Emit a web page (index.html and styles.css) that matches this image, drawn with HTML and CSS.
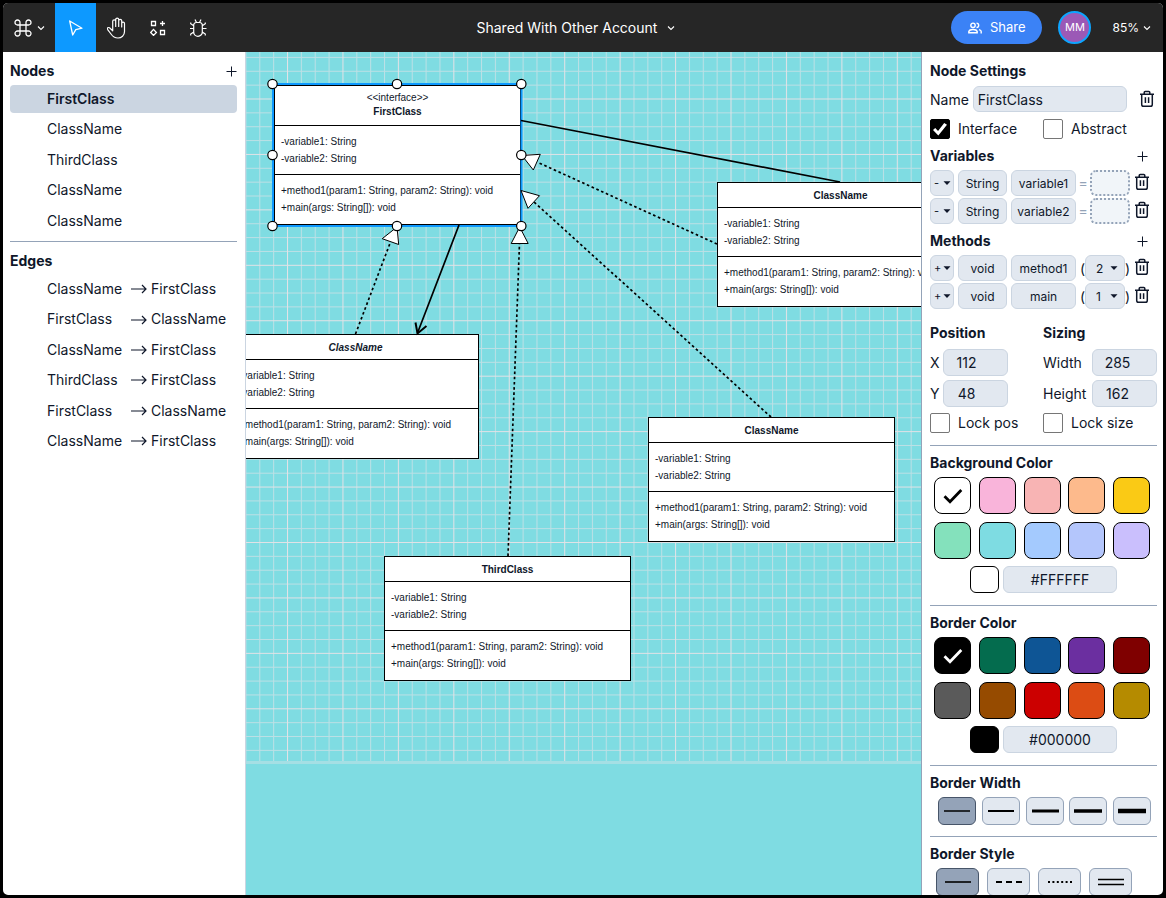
FILE: index.html
```html
<!DOCTYPE html>
<html lang="en">
<head>
<meta charset="utf-8">
<title>Shared With Other Account</title>
<link rel="stylesheet" href="styles.css">
</head>
<body>
<svg class="symbols" aria-hidden="true">
  <symbol id="chevron" viewBox="0 0 8 8"><path d="M1 2.5 4 5.5 7 2.5" fill="none" stroke="currentColor" stroke-width="1.1"/></symbol>
  <symbol id="plus" viewBox="0 0 11 11"><path d="M5.5 0.5v10M0.5 5.5h10" fill="none" stroke="currentColor" stroke-width="1"/></symbol>
  <symbol id="caret" viewBox="0 0 8 8"><path d="M0.5 2.2h7L4 6z" fill="currentColor"/></symbol>
  <symbol id="arrow" viewBox="0 0 16 10"><path d="M0 5h15M11 1l4 4-4 4" fill="none" stroke="currentColor" stroke-width="1.2"/></symbol>
  <symbol id="trash" viewBox="0 0 16 18"><path d="M1 4.2h14M5.2 4V2.6a1 1 0 0 1 1-1h3.6a1 1 0 0 1 1 1V4M2.7 4.4V14.5a1.8 1.8 0 0 0 1.8 1.8h7a1.8 1.8 0 0 0 1.8-1.8V4.4M6.4 7.3v5.8M9.6 7.3v5.8" fill="none" stroke="currentColor" stroke-width="1.5"/></symbol>
  <symbol id="check" viewBox="0 0 20 16"><path d="M1.500 8.200 7 13.700 18.300 2" fill="none" stroke="currentColor" stroke-width="2.800"/></symbol>
</svg>
<div class="app">
  <header class="toolbar">
    <div class="tools">
      <button class="tool tool-menu" aria-label="Menu">
        <svg width="18" height="18" viewBox="0 0 18 18" fill="none" stroke="currentColor" stroke-width="1.3"><path d="M6 6h6v6H6zM6 6H3.7A2.5 2.5 0 1 1 6 3.6zM12 6V3.6A2.5 2.5 0 1 1 14.3 6zM12 12h2.3A2.5 2.5 0 1 1 12 14.4zM6 12v2.4A2.5 2.5 0 1 1 3.7 12z"/></svg>
        <svg width="8" height="8"><use href="#chevron"/></svg>
      </button>
      <button class="tool active" aria-label="Select">
        <svg width="16" height="18" viewBox="0 0 16 18" fill="none" stroke="currentColor" stroke-width="1.3" stroke-linejoin="round"><path d="M1.700 2 14 9.200 7.800 10.700 4.700 16z"/></svg>
      </button>
      <button class="tool" aria-label="Pan">
        <svg width="20" height="22" viewBox="1 0 20 22" fill="none" stroke="currentColor" stroke-width="1.200" stroke-linecap="round" stroke-linejoin="round"><path d="M6.700 11V4.300a1.500 1.500 0 0 1 3 0V9.500M9.700 9.500V2.600a1.500 1.500 0 0 1 3 0V9.500M12.700 9.500V3.800a1.500 1.500 0 0 1 3 0V10M15.700 10V6.500a1.400 1.400 0 0 1 2.800 0V14.500C18.500 18.500 15.500 21 12 21 8.500 21 6.500 19.300 5 17L1.500 12.300C.8 11 2.200 10 3.500 10.800L6.700 13.800V4.300"/></svg>
      </button>
      <button class="tool" aria-label="Shapes">
        <svg width="16" height="16" viewBox="0 0 16 16" fill="none" stroke="currentColor" stroke-width="1.300"><path d="M1.500 1.500h4v4h-4zM10.500 10.500h4v4h-4zM12.500 1v5M10 3.500h5M3.500 9.400 6.400 12.500 3.500 15.400.7 12.500z"/></svg>
      </button>
      <button class="tool" aria-label="Debug">
        <svg width="18" height="20" viewBox="1 0 18 20" fill="none" stroke="currentColor" stroke-width="1.200"><path d="M4.700 6.500A3 3 0 0 1 7 4.500h4a3 3 0 0 1 2.300 2V14a4.300 4.300 0 0 1-8.600 0zM6 1.500 7.500 4.500M12 1.500 10.500 4.500M1 10.500h3.700M13.300 10.500h4.200M1.700 4.500v1.300l3 2M16.300 4.500v1.300l-3 2M1.700 17.500V16l3-2M16.300 17.500V16l-3-2"/></svg>
      </button>
    </div>
    <button class="project">Shared With Other Account <svg width="8" height="8"><use href="#chevron"/></svg></button>
    <div class="account">
      <button class="share"><svg width="14" height="12" viewBox="0 0 14 12" fill="none" stroke="currentColor" stroke-width="1.400"><circle cx="5" cy="3.300" r="2.200"/><path d="M.8 10.700V9.500C1.300 7.900 3 7.500 5 7.500s3.700.4 4.200 2v1.200zM8.500 1.100a2.200 2.200 0 0 1 0 4.400M11 7.600c1.500.5 2.200 1 2.200 2v1.800"/></svg>Share</button>
      <span class="avatar">MM</span>
      <button class="zoom">85% <svg width="8" height="8"><use href="#chevron"/></svg></button>
    </div>
  </header>

  <main class="workspace">
    <aside class="sidebar">
      <div class="heading-row"><h2>Nodes</h2><button class="icon-button" aria-label="Add node"><svg width="11" height="11"><use href="#plus"/></svg></button></div>
      <ul class="list">
        <li class="selected">FirstClass</li>
        <li>ClassName</li>
        <li>ThirdClass</li>
        <li>ClassName</li>
        <li>ClassName</li>
      </ul>
      <hr>
      <div class="heading-row"><h2>Edges</h2></div>
      <ul class="list">
        <li><span>ClassName</span><svg width="16" height="10"><use href="#arrow"/></svg>FirstClass</li>
        <li><span>FirstClass</span><svg width="16" height="10"><use href="#arrow"/></svg>ClassName</li>
        <li><span>ClassName</span><svg width="16" height="10"><use href="#arrow"/></svg>FirstClass</li>
        <li><span>ThirdClass</span><svg width="16" height="10"><use href="#arrow"/></svg>FirstClass</li>
        <li><span>FirstClass</span><svg width="16" height="10"><use href="#arrow"/></svg>ClassName</li>
        <li><span>ClassName</span><svg width="16" height="10"><use href="#arrow"/></svg>FirstClass</li>
      </ul>
    </aside>

    <section class="canvas" aria-label="Diagram">
      <svg class="layer">
        <defs>
          <pattern id="grid" width="64" height="64" patternUnits="userSpaceOnUse" patternTransform="translate(41 46.500) scale(.8662)">
            <path d="M16.600 0v64M32.600 0v64M48.600 0v64M0 16.600h64M0 32.600h64M0 48.600h64" stroke="#dde2e6" stroke-opacity=".65" stroke-width="1.150"/>
            <path d="M.6 0v64M0 .6h64" stroke="#e2e2e6" stroke-width="1.200"/>
          </pattern>
        </defs>
        <rect width="100%" height="709" fill="url(#grid)"/>
        <rect y="709" width="100%" height="3" fill="#a5dfe4"/>
      </svg>

      <article class="node node-first">
        <header><span>&lt;&lt;interface&gt;&gt;</span><b>FirstClass</b></header>
        <div><p>-variable1: String</p><p>-variable2: String</p></div>
        <div><p>+method1(param1: String, param2: String): void</p><p>+main(args: String[]): void</p></div>
      </article>
      <article class="node node-right">
        <header><b>ClassName</b></header>
        <div><p>-variable1: String</p><p>-variable2: String</p></div>
        <div><p>+method1(param1: String, param2: String): void</p><p>+main(args: String[]): void</p></div>
      </article>
      <article class="node node-abstract">
        <header><b>ClassName</b></header>
        <div><p>-variable1: String</p><p>-variable2: String</p></div>
        <div><p>+method1(param1: String, param2: String): void</p><p>+main(args: String[]): void</p></div>
      </article>
      <article class="node node-lower">
        <header><b>ClassName</b></header>
        <div><p>-variable1: String</p><p>-variable2: String</p></div>
        <div><p>+method1(param1: String, param2: String): void</p><p>+main(args: String[]): void</p></div>
      </article>
      <article class="node node-third">
        <header><b>ThirdClass</b></header>
        <div><p>-variable1: String</p><p>-variable2: String</p></div>
        <div><p>+method1(param1: String, param2: String): void</p><p>+main(args: String[]): void</p></div>
      </article>

      <svg class="layer">
        <g transform="translate(-246 -52)" fill="none" stroke="#000" stroke-width="1.700">
          <rect x="273" y="84" width="248.500" height="142" stroke="#0d99ff" stroke-width="2"/>
          <path d="M521 120.500 840 182M459 225 417.500 333"/>
          <path d="M415.500 322.500 417.500 333.500 426.500 326" stroke-width="2"/>
          <path d="M717 244 537 162M771 417 534 202M355.500 334 390.500 242M508 556 519.500 243" stroke-dasharray="2.600 2.600"/>
          <g fill="#fff" stroke-width="1"><path d="M522 155.500 540.300 154.300 533.300 170zM521 190.500 539.500 195.700 528 208.300zM397 227 382.200 238.700 398.700 244.500zM519.700 227 511.200 243.500h17z"/></g>
          <g fill="#fff" stroke-width="1.200"><circle cx="272.500" cy="84" r="4.700"/><circle cx="397" cy="84" r="4.700"/><circle cx="521.300" cy="84" r="4.700"/><circle cx="272.500" cy="155" r="4.700"/><circle cx="521.300" cy="155" r="4.700"/><circle cx="272.500" cy="226" r="4.700"/><circle cx="397" cy="226" r="4.700"/><circle cx="521.300" cy="226" r="4.700"/></g>
        </g>
      </svg>
    </section>

    <aside class="settings">
      <h2>Node Settings</h2>
      <div class="name-row"><label for="name">Name</label><input id="name" class="field" value="FirstClass"><button class="icon-button" aria-label="Delete node"><svg width="16" height="18"><use href="#trash"/></svg></button></div>
      <div class="halves"><label class="tick"><input type="checkbox" checked>Interface</label><label class="tick"><input type="checkbox">Abstract</label></div>

      <div class="heading-row member-heading"><h2>Variables</h2><button class="icon-button" aria-label="Add variable"><svg width="11" height="11"><use href="#plus"/></svg></button></div>
      <div class="members">
        <div class="member">
          <div class="select"><select aria-label="Visibility"><option>-</option></select><svg width="8" height="8"><use href="#caret"/></svg></div>
          <input class="field" aria-label="Type" value="String"><input class="field" aria-label="Variable name" value="variable1"><span class="equals">=</span><input class="field empty" aria-label="Default value">
          <button class="icon-button" aria-label="Delete variable"><svg width="16" height="18"><use href="#trash"/></svg></button>
        </div>
        <div class="member">
          <div class="select"><select aria-label="Visibility"><option>-</option></select><svg width="8" height="8"><use href="#caret"/></svg></div>
          <input class="field" aria-label="Type" value="String"><input class="field" aria-label="Variable name" value="variable2"><span class="equals">=</span><input class="field empty" aria-label="Default value">
          <button class="icon-button" aria-label="Delete variable"><svg width="16" height="18"><use href="#trash"/></svg></button>
        </div>
      </div>
      <div class="heading-row member-heading"><h2>Methods</h2><button class="icon-button" aria-label="Add method"><svg width="11" height="11"><use href="#plus"/></svg></button></div>
      <div class="members">
        <div class="member">
          <div class="select"><select aria-label="Visibility"><option>+</option></select><svg width="8" height="8"><use href="#caret"/></svg></div>
          <input class="field" aria-label="Return type" value="void"><input class="field" aria-label="Method name" value="method1">
          <div class="params"><span>(</span><div class="select count"><select aria-label="Parameter count"><option>2</option></select><svg width="8" height="8"><use href="#caret"/></svg></div><span>)</span></div>
          <button class="icon-button" aria-label="Delete method"><svg width="16" height="18"><use href="#trash"/></svg></button>
        </div>
        <div class="member">
          <div class="select"><select aria-label="Visibility"><option>+</option></select><svg width="8" height="8"><use href="#caret"/></svg></div>
          <input class="field" aria-label="Return type" value="void"><input class="field" aria-label="Method name" value="main">
          <div class="params"><span>(</span><div class="select count"><select aria-label="Parameter count"><option>1</option></select><svg width="8" height="8"><use href="#caret"/></svg></div><span>)</span></div>
          <button class="icon-button" aria-label="Delete method"><svg width="16" height="18"><use href="#trash"/></svg></button>
        </div>
      </div>

      <div class="halves geometry">
        <div class="stack">
          <h2>Position</h2>
          <div class="axis"><label for="x">X</label><input id="x" class="field" value="112"></div>
          <div class="axis"><label for="y">Y</label><input id="y" class="field" value="48"></div>
          <label class="tick"><input type="checkbox">Lock pos</label>
        </div>
        <div class="stack">
          <h2>Sizing</h2>
          <div class="axis size"><label for="w">Width</label><input id="w" class="field" value="285"></div>
          <div class="axis size"><label for="h">Height</label><input id="h" class="field" value="162"></div>
          <label class="tick"><input type="checkbox">Lock size</label>
        </div>
      </div>
      <hr>
      <h2>Background Color</h2>
      <div class="swatches">
        <button class="swatch white" aria-label="White"><svg width="20" height="16"><use href="#check"/></svg></button><button class="swatch pink" aria-label="Pink"></button><button class="swatch salmon" aria-label="Salmon"></button><button class="swatch peach" aria-label="Peach"></button><button class="swatch yellow" aria-label="Yellow"></button>
        <button class="swatch mint" aria-label="Mint"></button><button class="swatch aqua" aria-label="Aqua"></button><button class="swatch sky" aria-label="Sky"></button><button class="swatch periwinkle" aria-label="Periwinkle"></button><button class="swatch lavender" aria-label="Lavender"></button>
      </div>
      <div class="custom"><span class="preview white"></span><input class="field" aria-label="Background hex" value="#FFFFFF"></div>
      <hr>
      <h2>Border Color</h2>
      <div class="swatches">
        <button class="swatch black" aria-label="Black"><svg width="20" height="16"><use href="#check"/></svg></button><button class="swatch green" aria-label="Green"></button><button class="swatch blue" aria-label="Blue"></button><button class="swatch purple" aria-label="Purple"></button><button class="swatch maroon" aria-label="Maroon"></button>
        <button class="swatch gray" aria-label="Gray"></button><button class="swatch brown" aria-label="Brown"></button><button class="swatch red" aria-label="Red"></button><button class="swatch orange" aria-label="Orange"></button><button class="swatch gold" aria-label="Gold"></button>
      </div>
      <div class="custom"><span class="preview black"></span><input class="field" aria-label="Border hex" value="#000000"></div>
      <hr>
      <h2>Border Width</h2>
      <div class="choices widths">
        <button class="choice chosen" aria-label="1 pixel"><svg width="28" height="8"><path d="M1 4h26" stroke="#000" stroke-width="1.500"/></svg></button>
        <button class="choice" aria-label="2 pixels"><svg width="28" height="8"><path d="M1 4h26" stroke="#000" stroke-width="2"/></svg></button>
        <button class="choice" aria-label="3 pixels"><svg width="28" height="8"><path d="M1 4h27" stroke="#000" stroke-width="3"/></svg></button>
        <button class="choice" aria-label="4 pixels"><svg width="28" height="8"><path d="M0 4h28" stroke="#000" stroke-width="3.600"/></svg></button>
        <button class="choice" aria-label="5 pixels"><svg width="28" height="8"><path d="M0 4h28" stroke="#000" stroke-width="4.400"/></svg></button>
      </div>
      <hr>
      <h2>Border Style</h2>
      <div class="choices styles">
        <button class="choice chosen" aria-label="Solid"><svg width="26" height="8"><path d="M0 4h26" stroke="#000" stroke-width="1.600"/></svg></button>
        <button class="choice" aria-label="Dashed"><svg width="26" height="8"><path d="M0 4h26" stroke="#000" stroke-width="2" stroke-dasharray="6 4"/></svg></button>
        <button class="choice" aria-label="Dotted"><svg width="26" height="8"><path d="M1 4h25" stroke="#000" stroke-width="2" stroke-dasharray="2 2.400"/></svg></button>
        <button class="choice" aria-label="Double"><svg width="26" height="8"><path d="M0 1.500h26M0 6.500h26" stroke="#000" stroke-width="1.500"/></svg></button>
      </div>
    </aside>
  </main>
</div>
</body>
</html>
```
FILE: styles.css
```css
* { box-sizing: border-box; }
body { margin: 0; background: #000; color: #0f172a; font: 14px/1.5 Inter, "Liberation Sans", sans-serif; }
h2, p, ul { margin: 0; padding: 0; }
button { font: inherit; color: inherit; background: none; border: 0; padding: 0; }
svg { display: block; flex: none; }
hr { width: 100%; height: 1px; margin: 0; border: 0; background: #94a3b8; flex: none; }
h2 { font-size: 14px; font-weight: 700; line-height: 20px; }
.symbols { position: absolute; width: 0; height: 0; }

.app { height: 100vh; display: flex; flex-direction: column; border: 3px solid #000; border-radius: 8px; overflow: hidden; background: #fff; }

.toolbar { flex: none; height: 49px; display: flex; justify-content: space-between; align-items: stretch; background: #262626; color: #fff; }
.tools { display: flex; }
.tool { width: 41px; display: grid; place-items: center; }
.tool-menu { width: 52px; display: flex; justify-content: center; align-items: center; gap: 5px; }
.tool.active { background: #0d99ff; }
.project { display: flex; align-items: center; gap: 10px; margin-right: 18px; }
.account { display: flex; align-items: center; gap: 16px; padding-right: 12px; }
.share { height: 33px; padding: 0 17px; display: flex; align-items: center; gap: 8px; border-radius: 17px; background: #3b82f6; font-size: 13px; }
.avatar { width: 33px; height: 33px; display: grid; place-items: center; border: 2px solid #0ea5ff; border-radius: 50%; background: #9b59b6; font-size: 11px; }
.zoom { display: flex; align-items: center; gap: 4px; margin-left: 5px; font-size: 12px; }

.workspace { flex: 1; min-height: 0; display: flex; }
.sidebar { flex: none; width: 243px; padding: 9px 8px 0 7px; border-right: 1px solid #cbd5e1; }
.heading-row { display: flex; justify-content: space-between; align-items: center; }
.icon-button { display: grid; place-items: center; }
.list { display: grid; gap: 2px; padding: 4px 0 6px; list-style: none; line-height: 1.6; }
.list li { display: flex; align-items: center; padding: 3px 0 3px 37px; border-radius: 4px; }
.list li span { width: 84px; }
.list li svg { margin-right: 4px; }
.list .selected { background: #cbd5e1; font-weight: 600; }
.sidebar hr + .heading-row { padding-top: 9px; }

.canvas { position: relative; flex: 1; min-width: 0; overflow: hidden; background: #7fdce2; }
.layer { position: absolute; inset: 0; width: 100%; height: 100%; pointer-events: none; }
.node { position: absolute; width: 247px; border: 1px solid #000; background: #fff; font: 10px/17px "Liberation Sans", Arial, sans-serif; }
.node header { display: grid; padding: 4px 0 3px; text-align: center; }
.node div { padding: 7px 6px; border-top: 1px solid #000; white-space: nowrap; }
.node div:last-child { padding-bottom: 8px; }
.node-first { left: 28px; top: 33px; }
.node-first header { padding: 5px 0 6px; line-height: 14px; }
.node-right { left: 471px; top: 130px; }
.node-abstract { left: -14px; top: 282px; }
.node-abstract header { font-style: italic; }
.node-lower { left: 402px; top: 365px; }
.node-third { left: 138px; top: 504px; }

.settings { flex: none; width: 242px; padding: 9px 6px 0 8px; border-left: 1px solid #94a3b8; overflow: hidden; display: flex; flex-direction: column; }
.settings > * { flex: none; }
.field { width: 100%; min-width: 0; height: 26px; padding: 0; border: 1px solid #cbd5e1; border-radius: 6px; background: #e2e8f0; color: #0f172a; font: 12px Inter, sans-serif; text-align: center; }
.name-row { display: flex; align-items: center; gap: 4px; padding: 5px 0 7px; }
.name-row .field { flex: 1; padding: 0 4px; font-size: 14px; text-align: left; }
.name-row .icon-button { margin: 0 2px 0 8px; }
.halves { display: grid; grid-template-columns: 113px 1fr; }
.tick { display: flex; align-items: center; gap: 8px; line-height: 20px; }
.tick input { appearance: none; width: 20px; height: 20px; margin: 0; display: grid; place-items: center; border: 1px solid #767676; border-radius: 2px; background: #fff; }
.tick input:checked { border-color: #000; background: #000; }
.tick input:checked::before { content: ""; width: 14px; height: 13px; background: #fff; clip-path: polygon(0 58%, 16% 43%, 36% 65%, 80% 3%, 100% 17%, 38% 100%); }
.member-heading { padding: 7px 9px 4px 0; }
.members { display: grid; gap: 2px; }
.member { display: grid; grid-template-columns: 24px 49px 1fr 6px 40px 16px; column-gap: 4px; align-items: center; padding-right: 7px; }
.member .icon-button { padding-bottom: 2px; }
.equals { color: #94a3b8; line-height: 20px; display: grid; justify-content: center; }
.params { grid-column: 4 / span 2; display: flex; align-items: center; justify-content: space-between; }
.select { display: grid; grid-template-columns: 1fr 11px; align-items: center; }
.select select { grid-area: 1 / 1 / 2 / 3; appearance: none; width: 100%; height: 26px; padding: 0 0 0 3px; border: 1px solid #cbd5e1; border-radius: 6px; background: #e2e8f0; color: #0f172a; font: 11px Inter, sans-serif; }
.select svg { grid-area: 1 / 2; pointer-events: none; z-index: 1; }
.select.count { width: 40px; grid-template-columns: 1fr 15px; }
.count select { padding-left: 10px; font-size: 12px; }
.empty { border: 2px dotted #94a3b8; background: #f1f5f9; }
.geometry { padding: 14px 0 12px; }
.stack { display: grid; gap: 4px; }
.stack h2 { margin-bottom: 2px; }
.axis { display: flex; align-items: center; gap: 4px; }
.axis label { width: 9px; }
.axis .field { width: 65px; height: 27px; padding-right: 18px; font-size: 14px; }
.axis.size label { flex: 1; }
.axis.size .field { padding-right: 14px; }
.geometry .tick { padding-top: 2px; }
hr + h2 { margin-top: 7px; }
.swatches { display: grid; grid-template-columns: repeat(5, 37px); justify-content: space-between; gap: 8px 0; padding: 4px 7px 7px 4px; }
.swatch { height: 37px; display: grid; place-items: center; border: 1px solid #000; border-radius: 8px; }
.swatch.white { color: #000; }
.custom { display: flex; justify-content: center; gap: 4px; padding-bottom: 12px; }
.preview { width: 29px; height: 27px; border: 1px solid #000; border-radius: 6px; }
.custom .field { width: 114px; height: 27px; font-size: 14px; }
.choices { display: grid; padding: 4px 6px 11px 8px; justify-content: space-between; }
.widths { grid-template-columns: repeat(5, 38px); }
.styles { grid-template-columns: repeat(4, 43px); padding: 4px 25px 0 6px; }
.choice { height: 28px; display: grid; place-items: center; border: 1px solid #94a3b8; border-radius: 6px; background: #e2e8f0; }
.chosen { border-color: #475569; background: #94a3b8; }

.white { background: #fff; }
.pink { background: #f9b4da; }
.salmon { background: #f8b4b4; }
.peach { background: #fdba8c; }
.yellow { background: #faca15; }
.mint { background: #84e1bc; }
.aqua { background: #7edce2; }
.sky { background: #a4cafe; }
.periwinkle { background: #b4c6fc; }
.lavender { background: #cabffd; }
.black { background: #000; color: #fff; }
.green { background: #046c4e; }
.blue { background: #0e5595; }
.purple { background: #6b2fa0; }
.maroon { background: #7f0000; }
.gray { background: #5a5a5a; }
.brown { background: #964b00; }
.red { background: #cc0000; }
.orange { background: #dc4c14; }
.gold { background: #b58b00; }
```
